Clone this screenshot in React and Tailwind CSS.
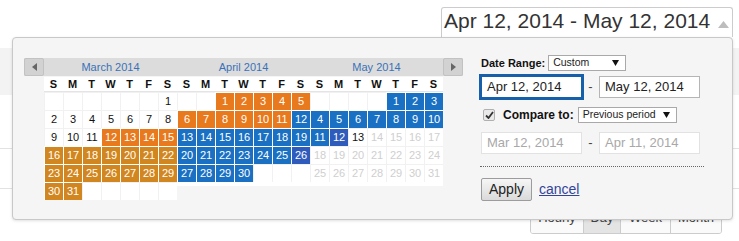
import React from 'react'

// tones for the calendar cells
const tone = {
  empty: 'bg-white border-[#f1f1f1]',
  plain: 'bg-white border-[#f1f1f1] text-[#111]',
  muted: 'bg-white border-[#f1f1f1] text-[#cfcfcf]',
  orange: 'bg-[#e8791d] border-white text-white',
  gold: 'bg-[#d2861f] border-white text-white',
  blue: 'bg-[#1a70c2] border-white text-white',
  indigo: 'bg-[#2f5bbd] border-white text-white',
}

const months = [
  {
    name: 'March 2014',
    start: 6,
    days: 31,
    rows: 6,
    pick: (d) => (d < 12 ? 'plain' : d < 16 ? 'orange' : 'gold'),
  },
  {
    name: 'April 2014',
    start: 2,
    days: 30,
    rows: 5,
    pick: (d) => (d < 12 ? 'orange' : d === 26 ? 'indigo' : 'blue'),
  },
  {
    name: 'May 2014',
    start: 4,
    days: 31,
    rows: 5,
    pick: (d) => (d === 12 ? 'indigo' : d < 12 ? 'blue' : d === 13 ? 'plain' : 'muted'),
  },
]

function Month({ start, days, rows, pick }) {
  const cells = []
  for (let i = 0; i < rows * 7; i++) {
    const d = i - start + 1
    cells.push(d >= 1 && d <= days ? d : null)
  }

  return (
    <div className={`w-[133px] bg-white ${rows === 5 ? 'pb-[4px]' : ''}`}>
      <div className="grid grid-cols-[repeat(7,19px)] h-[15px] border-b border-[#e4e4e4] text-[11px] font-bold text-[#111] leading-[14px]">
        {['S', 'M', 'T', 'W', 'T', 'F', 'S'].map((l, i) => (
          <span key={i} className="text-center">{l}</span>
        ))}
      </div>
      <div className="grid grid-cols-[repeat(7,19px)]">
        {cells.map((d, i) => (
          <div
            key={i}
            className={`h-[18px] flex items-center justify-center border-l border-t text-[11px] ${tone[d ? pick(d) : 'empty']}`}
          >
            {d}
          </div>
        ))}
      </div>
    </div>
  )
}

function NavButton({ dir }) {
  return (
    <button className="w-[20px] h-[18px] flex items-center justify-center bg-[#d2d2d2] border border-[#c2c2c2] rounded-[2px]">
      <svg width="5" height="8" viewBox="0 0 5 8">
        {dir === 'left' ? (
          <polygon points="5,0 0,4 5,8" fill="#666" />
        ) : (
          <polygon points="0,0 5,4 0,8" fill="#666" />
        )}
      </svg>
    </button>
  )
}

function Calendar() {
  return (
    <div className="mt-[3px] w-[439px] flex flex-col">
      <div className="flex h-[18px] bg-[#dcdcdc] mb-px">
        <NavButton dir="left" />
        {months.map((m) => (
          <div key={m.name} className="w-[133px] text-center text-[11px] leading-[18px] text-[#3a72b8]">
            {m.name}
          </div>
        ))}
        <NavButton dir="right" />
      </div>
      <div className="ml-[20px] flex items-start">
        {months.map((m) => (
          <Month key={m.name} {...m} />
        ))}
      </div>
    </div>
  )
}

function Select({ label, width }) {
  return (
    <div className={`${width} h-[16px] flex items-center justify-between bg-white border border-[#a9a9a9] pl-[4px] pr-[6px] text-[10.5px] text-[#222]`}>
      <span>{label}</span>
      <svg width="7" height="6" viewBox="0 0 7 6">
        <polygon points="0,0 7,0 3.5,6" fill="#111" />
      </svg>
    </div>
  )
}

function DateInput({ value, focused, faded }) {
  return (
    <div
      className={`w-[101px] h-[22px] flex items-center pl-[5px] text-[13px] bg-white border ${
        focused
          ? 'border-[#1560a8] outline-2 outline-solid outline-[#1560a8] text-[#222]'
          : faded
            ? 'border-[#e2e2e2] text-[#a8a8a8]'
            : 'border-[#b5b5b5] text-[#222]'
      }`}
    >
      {value}
    </div>
  )
}

function RangeForm() {
  return (
    <div className="ml-[18px] w-[222px] flex flex-col text-[#111]">
      <div className="h-[16px] flex items-center gap-[3px]">
        <span className="text-[11px] font-bold">Date Range:</span>
        <Select label="Custom" width="w-[78px]" />
      </div>

      <div className="mt-[5px] flex items-center">
        <DateInput value="Apr 12, 2014" focused />
        <span className="w-[17px] text-center text-[13px] text-[#444]">-</span>
        <DateInput value="May 12, 2014" />
      </div>

      <div className="mt-[9px] h-[16px] flex items-center">
        <span className="ml-[2px] w-[12px] h-[12px] flex items-center justify-center rounded-[2px] border border-[#b0b0b0] bg-[#e9e9e9]">
          <svg width="9" height="8" viewBox="0 0 9 8">
            <path d="M1 4.5 L3.5 7 L8 1" fill="none" stroke="#333" strokeWidth="1.8" />
          </svg>
        </span>
        <span className="ml-[8px] mr-[4px] text-[12px] font-bold">Compare to:</span>
        <Select label="Previous period" width="w-[99px]" />
      </div>

      <div className="mt-[9px] flex items-center">
        <DateInput value="Mar 12, 2014" faded />
        <span className="w-[17px] text-center text-[13px] text-[#444]">-</span>
        <DateInput value="Apr 11, 2014" faded />
      </div>

      <div className="mt-[12px] -ml-px w-[224px] border-t border-dotted border-[#666]" />

      <div className="mt-[11px] flex items-center gap-[7px]">
        <button className="w-[51px] h-[23px] rounded-[2px] border border-[#9c9c9c] bg-gradient-to-b from-[#f6f6f6] to-[#dadada] text-[14px] text-[#222]">
          Apply
        </button>
        <a className="text-[14px] text-[#33449a] underline">cancel</a>
      </div>
    </div>
  )
}

export default function App() {
  return (
    <div className="relative w-[739px] h-[241px] overflow-hidden bg-white font-['Liberation_Sans',Arial,sans-serif]">
      {/* selected range summary */}
      <div className="h-[37px] flex justify-end pt-[7px] pr-[6px]">
        <div className="w-[292px] h-[30px] flex items-start pl-[2px] pt-[1px] bg-white border border-b-0 border-[#cccccc] rounded-t-[3px]">
          <span className="text-[21px] leading-[24px] text-[#333]">Apr 12, 2014 - May 12, 2014</span>
          <svg className="ml-[8px] mt-[12px]" width="11" height="7" viewBox="0 0 11 7">
            <polygon points="0,7 5.5,0 11,7" fill="#bdbdbd" />
          </svg>
        </div>
      </div>

      {/* page content behind the popup */}
      <div className="mt-[11px] h-[47px] bg-[#f3f3f3]" />
      <div className="h-[54px] border-b border-[#e2e2e2]" />
      <div className="h-[40px] border-b border-[#e2e2e2]" />
      <div className="mt-[15px] flex justify-end pr-[17px]">
        <div className="flex h-[30px] border border-[#cccccc] rounded-[3px] text-[13px] leading-[15px] text-[#444] overflow-hidden">
          <span className="w-[52px] pt-[5px] text-center bg-[#fafafa]">Hourly</span>
          <span className="w-[37px] pt-[5px] text-center bg-[#e4e4e4] border-l border-[#cccccc]">Day</span>
          <span className="w-[50px] pt-[5px] text-center bg-[#fafafa] border-l border-[#cccccc]">Week</span>
          <span className="w-[51px] pt-[5px] text-center bg-[#fafafa] border-l border-[#cccccc]">Month</span>
        </div>
      </div>

      {/* date range popup */}
      <div className="absolute left-[12px] top-[37px] w-[721px] h-[183px] flex items-start pt-[17px] pl-[11px] bg-[#f5f5f5] border border-[#c8c8c8] rounded-[4px] shadow-[0_1px_3px_rgba(0,0,0,0.12)]">
        <Calendar />
        <RangeForm />
      </div>
    </div>
  )
}
